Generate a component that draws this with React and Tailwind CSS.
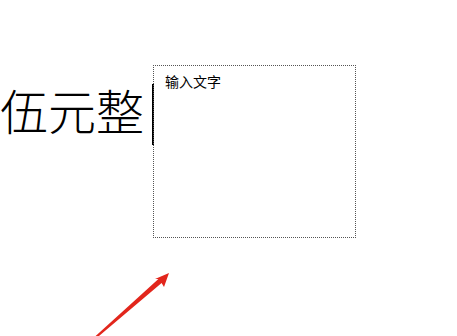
export default function App() {
  return (
    <div className="relative w-[457px] h-[336px] bg-white overflow-hidden">
      <div className="flex items-start pt-[65px] pl-0">
        <span
          className="mt-[20px] text-[48px] leading-[48px] text-black whitespace-nowrap font-light"
          style={{ fontFamily: '"Noto Sans CJK SC", sans-serif' }}
        >
          伍元整
        </span>
        <div className="ml-[8px] mt-[19px] w-[2px] h-[61px] bg-black" />
        <div className="-ml-[1px] w-[203px] h-[173px] border border-dotted border-[#555] pl-[11px] pt-[3px]">
          <span
            className="text-[14px] leading-[17px] text-black"
            style={{ fontFamily: '"Noto Sans CJK SC", sans-serif' }}
          >
            输入文字
          </span>
        </div>
      </div>
      <svg className="absolute left-0 top-0" width="457" height="336" viewBox="0 0 457 336">
        <polygon
          points="95.7,338.8 161.6,282.9 164,287 169,273 155,279 158.4,279.1 94.3,337.2"
          fill="#e2261c"
        />
      </svg>
    </div>
  );
}
